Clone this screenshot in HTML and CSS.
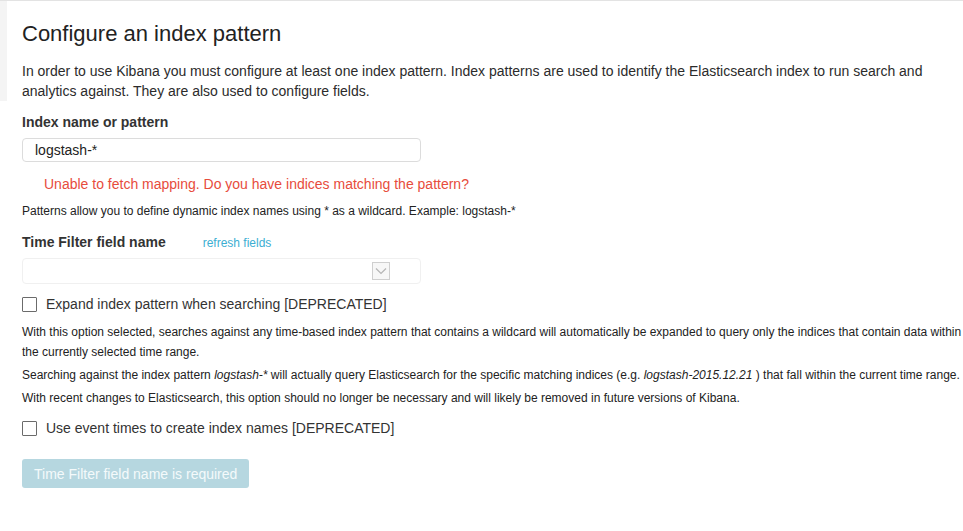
FILE: index.html
```html
<!DOCTYPE html>
<html lang="en">

<head>
    <meta charset="UTF-8">
    <title>Configure an index pattern</title>
    <link rel="stylesheet" href="styles.css">
</head>

<body>

    <div class="page">
        <div class="sidebar"></div>

        <div class="content">
            <h1>Configure an index pattern</h1>
            <p class="intro">In order to use Kibana you must configure at least one index pattern. Index patterns are used to identify the Elasticsearch index to run search and analytics against. They are also used to configure fields.</p>

            <label class="field-label">Index name or pattern</label>
            <div class="text-input">logstash-*</div>
            <div class="error">Unable to fetch mapping. Do you have indices matching the pattern?</div>
            <p class="hint">Patterns allow you to define dynamic index names using * as a wildcard. Example: logstash-*</p>

            <div class="label-row">
                <label class="field-label">Time Filter field name</label>
                <a class="refresh" href="#">refresh fields</a>
            </div>
            <div class="select">
                <span class="select-arrow">
                    <svg width="12" height="8" viewBox="0 0 12 8"><path d="M1 1.5 L6 6.5 L11 1.5" fill="none" stroke="#b5b5b5" stroke-width="1.2"/></svg>
                </span>
            </div>

            <label class="check-row">
                <input type="checkbox">
                <span>Expand index pattern when searching [DEPRECATED]</span>
            </label>

            <div class="help">
                <p>With this option selected, searches against any time-based index pattern that contains a wildcard will automatically be expanded to query only the indices that contain data within the currently selected time range.</p>
                <p>Searching against the index pattern <em>logstash-*</em> will actually query Elasticsearch for the specific matching indices (e.g. <em>logstash-2015.12.21</em> ) that fall within the current time range.</p>
                <p>With recent changes to Elasticsearch, this option should no longer be necessary and will likely be removed in future versions of Kibana.</p>
            </div>

            <label class="check-row">
                <input type="checkbox">
                <span>Use event times to create index names [DEPRECATED]</span>
            </label>

            <button class="btn-create" disabled>Time Filter field name is required</button>
        </div>
    </div>

</body>

</html>
```

FILE: styles.css
```css
body {
    font-family: "Liberation Sans", Arial, sans-serif;
    margin: 0;
    background-color: #ffffff;
    color: #2b2b2b;
    border-top: 1px solid #e3e3e3;
}

.page {
    display: flex;
    align-items: flex-start;
}

/* thin grey strip on the left edge */
.sidebar {
    width: 7px;
    height: 100px;
    flex-shrink: 0;
    background-color: #f4f4f4;
}

.content {
    flex: 1;
    padding-left: 15px;
}

h1 {
    font-size: 22px;
    font-weight: normal;
    line-height: 24px;
    margin: 21px 0 0;
    color: #222;
}

.intro {
    font-size: 14px;
    line-height: 20px;
    margin: 15px 0 0;
}

.field-label {
    display: block;
    font-size: 14px;
    font-weight: bold;
    line-height: 20px;
    color: #333;
}

.content > .field-label {
    margin-top: 11px;
}

.text-input {
    width: 399px;
    height: 24px;
    box-sizing: border-box;
    margin-top: 6px;
    padding: 0 12px;
    border: 1px solid #dcdcdc;
    border-radius: 4px;
    font-size: 14px;
    line-height: 22px;
    color: #222;
}

.error {
    margin-top: 12px;
    padding-left: 22px;
    font-size: 14px;
    line-height: 20px;
    color: #e74c3c;
}

.hint {
    margin: 9px 0 0;
    font-size: 12px;
    line-height: 17px;
    color: #222;
}

.label-row {
    display: flex;
    align-items: baseline;
    gap: 37px;
    margin-top: 12px;
}

.refresh {
    font-size: 12px;
    color: #3caed2;
    text-decoration: none;
}

.select {
    width: 399px;
    height: 26px;
    box-sizing: border-box;
    margin-top: 6px;
    padding-right: 30px;
    border: 1px solid #f0f0f0;
    border-radius: 4px;
    display: flex;
    align-items: center;
    justify-content: flex-end;
}

.select-arrow {
    width: 18px;
    height: 18px;
    box-sizing: border-box;
    border: 1px solid #cfcfcf;
    background-color: #f7f7f7;
    display: flex;
    align-items: center;
    justify-content: center;
}

.check-row {
    display: flex;
    align-items: center;
    gap: 9px;
    font-size: 14px;
    line-height: 20px;
    color: #333;
    margin-top: 10px;
}

.check-row input {
    appearance: none;
    width: 15px;
    height: 15px;
    margin: 0;
    border: 1px solid #6b6b6b;
    border-radius: 1px;
    background: #fff;
}

.help {
    margin-top: 8px;
    font-size: 12px;
    line-height: 20px;
    color: #222;
}

.help p {
    margin: 0 0 3px;
}

.btn-create {
    display: block;
    margin-top: 21px;
    height: 29px;
    padding: 0 12px;
    font-family: inherit;
    font-size: 14px;
    color: #ffffff;
    background-color: #b6d7e0;
    border: none;
    border-radius: 3px;
}

.btn-create:disabled {
    color: #f4fafb;
}
```
